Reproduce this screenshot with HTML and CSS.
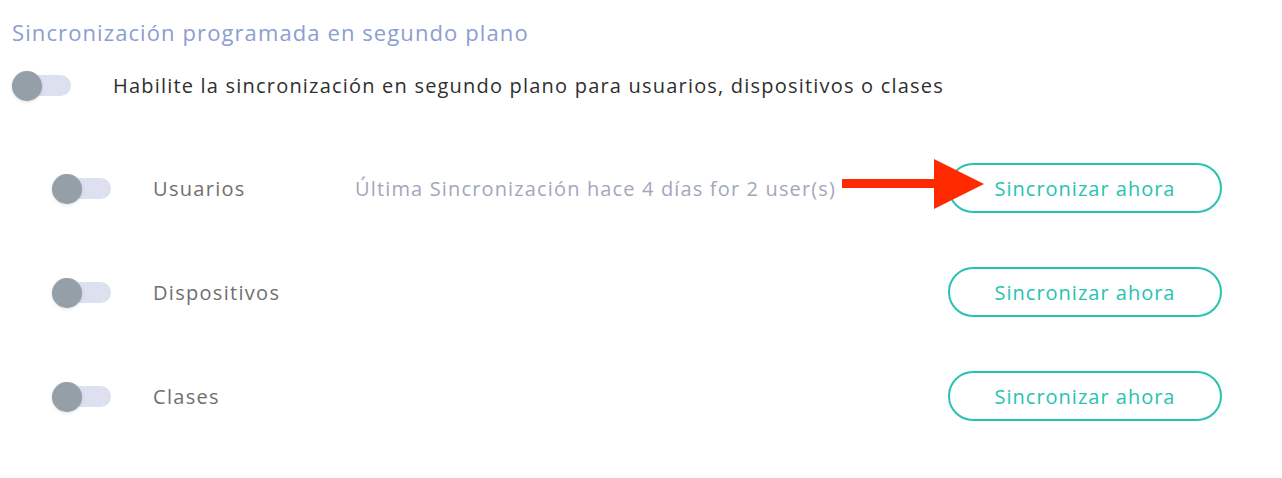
FILE: index.html
```html
<!DOCTYPE html>
<html lang="es">
<head>
    <meta charset="UTF-8">
    <meta name="viewport" content="width=device-width, initial-scale=1.0">
    <title>Sincronización</title>
    <link rel="stylesheet" href="styles.css">
</head>
<body>
    <div class="container">
        <h2 class="title">Sincronización programada en segundo plano</h2>
        <div class="main-row">
            <span class="switch"><span class="knob"></span></span>
            <span class="main-label">Habilite la sincronización en segundo plano para usuarios, dispositivos o clases</span>
        </div>
        <div class="sync-list">
            <div class="sync-row">
                <span class="switch"><span class="knob"></span></span>
                <span class="sync-label">Usuarios</span>
                <span class="last-sync">Última Sincronización hace 4 días for 2 user(s)</span>
                <div class="btn-wrap">
                    <svg class="arrow" width="143" height="52" viewBox="0 0 143 52">
                        <rect x="0" y="20" width="100" height="9" fill="#ff2a00"/>
                        <polygon points="92,0 142,25 92,50" fill="#ff2a00"/>
                    </svg>
                    <button class="sync-btn">Sincronizar ahora</button>
                </div>
            </div>
            <div class="sync-row">
                <span class="switch"><span class="knob"></span></span>
                <span class="sync-label">Dispositivos</span>
                <div class="btn-wrap">
                    <button class="sync-btn">Sincronizar ahora</button>
                </div>
            </div>
            <div class="sync-row">
                <span class="switch"><span class="knob"></span></span>
                <span class="sync-label">Clases</span>
                <div class="btn-wrap">
                    <button class="sync-btn">Sincronizar ahora</button>
                </div>
            </div>
        </div>
    </div>
</body>
</html>
```

FILE: styles.css
```css
body {
    font-family: "Open Sans", "Noto Sans", sans-serif;
    margin: 0;
    padding: 0;
    background-color: #ffffff;
}
.container {
    width: 1210px;
    padding: 16px 0 0 12px;
}
.title {
    margin: 0;
    font-size: 22px;
    font-weight: normal;
    letter-spacing: 1.1px;
    color: #8c9dd2;
    line-height: 32px;
}
.main-row {
    display: flex;
    align-items: center;
    height: 40px;
    margin-top: 17px;
}
.main-label {
    margin-left: 42px;
    font-size: 20px;
    letter-spacing: 1.2px;
    color: #2f2f2f;
}
.switch {
    position: relative;
    display: inline-block;
    width: 59px;
    height: 21px;
    border-radius: 11px;
    background-color: #dde0ee;
    flex-shrink: 0;
}
.knob {
    position: absolute;
    left: 0;
    top: -4px;
    width: 30px;
    height: 30px;
    border-radius: 50%;
    background-color: #959fa8;
    box-shadow: 0 1px 3px rgba(0, 0, 0, 0.15);
}
.sync-list {
    padding-left: 40px;
    margin-top: 57px;
}
.sync-row {
    display: flex;
    align-items: center;
    height: 52px;
    margin-bottom: 52px;
}
.sync-label {
    width: 202px;
    margin-left: 42px;
    font-size: 20px;
    letter-spacing: 1.3px;
    color: #6f6f6f;
}
.last-sync {
    font-size: 20px;
    letter-spacing: 1.15px;
    color: #a3a7bb;
}
.btn-wrap {
    position: relative;
    margin-left: auto;
    display: flex;
}
.arrow {
    position: absolute;
    left: -106px;
    top: -4px;
    z-index: 2;
}
.sync-btn {
    width: 274px;
    height: 50px;
    border: 2px solid #27c2b1;
    border-radius: 25px;
    background: white;
    color: #27c2b1;
    font-family: inherit;
    font-size: 20px;
    letter-spacing: 1px;
    cursor: pointer;
}
```
